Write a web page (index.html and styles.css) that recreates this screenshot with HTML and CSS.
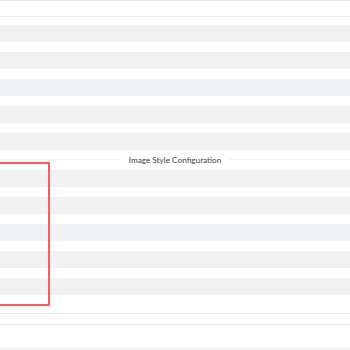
FILE: index.html
```html
<!DOCTYPE html>
<html>
<head>
    <meta charset="UTF-8">
    <title>Image Style Configuration</title>
    <link rel="stylesheet" href="styles.css">
</head>
<body>
    <div class="panel">
        <div class="panel-header"></div>

        <div class="skeleton skeleton-top">
            <div class="skeleton-row"></div>
            <div class="skeleton-row"></div>
            <div class="skeleton-row"></div>
            <div class="skeleton-row"></div>
            <div class="skeleton-row"></div>
        </div>

        <div class="divider">
            <span class="divider-text">Image Style Configuration</span>
        </div>

        <div class="skeleton">
            <div class="skeleton-row"></div>
            <div class="skeleton-row"></div>
            <div class="skeleton-row"></div>
            <div class="skeleton-row"></div>
            <div class="skeleton-row"></div>
        </div>

        <div class="panel-footer">
            <div class="footer-line"></div>
            <div class="footer-line tall"></div>
        </div>

        <div class="selection-box"></div>
    </div>
</body>
</html>
```

FILE: styles.css
```css
body {
    margin: 0;
    background-color: #fff;
    font-family: Lato, Arial, sans-serif;
}

.panel {
    position: relative;
    width: 350px;
    height: 350px;
    overflow: hidden;
    border-top: 1px solid #ececec;
    box-sizing: border-box;
}

.panel-header {
    height: 15px;
    border-bottom: 1px solid #efefef;
}

.skeleton {
    display: flex;
    flex-direction: column;
    gap: 10px;
}

.skeleton-top {
    padding-top: 8px;
}

.skeleton-row {
    height: 17px;
    background-color: #f0f1f3;
}

.divider {
    display: flex;
    align-items: center;
    height: 19px;
    padding-bottom: 1px;
    font-size: 8.2px;
    color: #444;
}

.divider::before,
.divider::after {
    content: "";
    flex: 1;
    border-top: 1px solid #f3f3f3;
}

.divider-text {
    padding: 0 8px;
    white-space: nowrap;
}

.panel-footer {
    padding-top: 18px;
}

.footer-line {
    height: 10px;
    border-top: 1px solid #ebebeb;
    border-bottom: 1px solid #ebebeb;
}

.footer-line.tall {
    height: 23px;
    border-top: none;
}

.selection-box {
    position: absolute;
    left: -10px;
    top: 161px;
    width: 56px;
    height: 140px;
    border: 2px solid #ff5b5b;
}
```
